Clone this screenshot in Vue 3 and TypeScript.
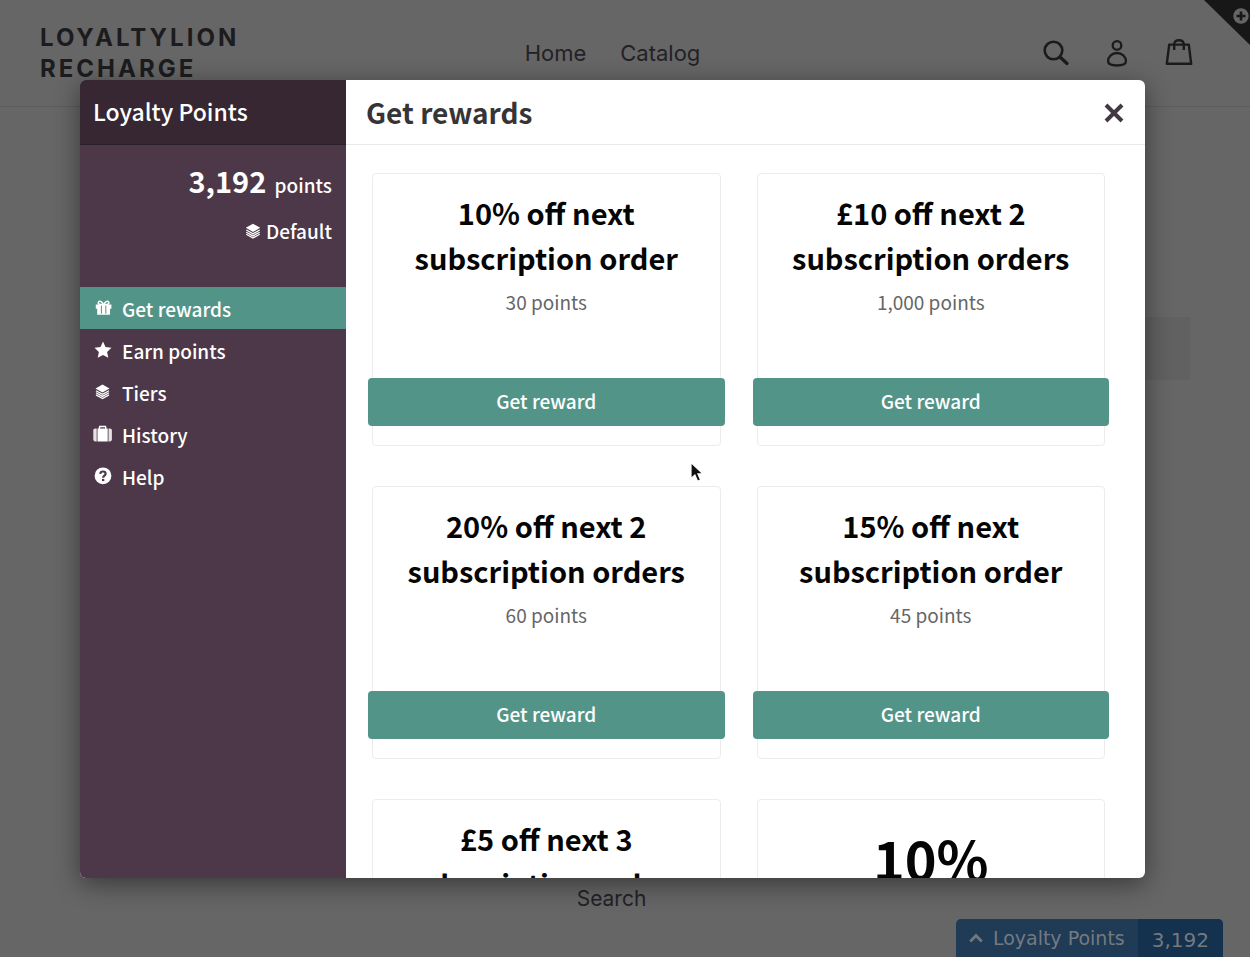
<script setup lang="ts">
import { ref } from 'vue'

interface Reward {
  title: string
  cost?: string
  large?: boolean
}

type IconName = 'gift' | 'star' | 'layers' | 'suitcase' | 'help'

interface MenuItem {
  label: string
  icon: IconName
}

const menu: MenuItem[] = [
  { label: 'Get rewards', icon: 'gift' },
  { label: 'Earn points', icon: 'star' },
  { label: 'Tiers', icon: 'layers' },
  { label: 'History', icon: 'suitcase' },
  { label: 'Help', icon: 'help' },
]

const rewards: Reward[] = [
  { title: '10% off next subscription order', cost: '30 points' },
  { title: '£10 off next 2 subscription orders', cost: '1,000 points' },
  { title: '20% off next 2 subscription orders', cost: '60 points' },
  { title: '15% off next subscription order', cost: '45 points' },
  { title: '£5 off next 3 subscription orders' },
  { title: '10%', large: true },
]

const active = ref('Get rewards')
</script>

<template>
  <div class="stage">
    <div class="store">
      <header class="store-header">
        <a class="logo" href="#">LOYALTYLION RECHARGE</a>
        <nav class="store-nav">
          <a href="#">Home</a>
          <a href="#">Catalog</a>
        </nav>
        <div class="store-tools">
          <button type="button" aria-label="Search the store">
            <svg width="28" height="28" viewBox="0 0 28 28" fill="none" stroke="#1d1a1e" stroke-width="2.6">
              <circle cx="12.5" cy="11.5" r="8.8" />
              <path d="M19 18l7 6.500" stroke-width="3.2" stroke-linecap="round" />
            </svg>
          </button>
          <button type="button" aria-label="Account">
            <svg width="28" height="28" viewBox="0 0 28 28" fill="none" stroke="#1d1a1e" stroke-width="2.3">
              <circle cx="14" cy="6.4" r="4.3" />
              <path d="M14 14c-5 0-8.900 3.600-8.900 8.300 0 3 2.400 4.200 8.900 4.200s8.900-1.200 8.900-4.200c0-4.700-3.900-8.300-8.900-8.300z" />
            </svg>
          </button>
          <button type="button" aria-label="Cart">
            <svg width="28" height="28" viewBox="0 0 28 28" fill="none" stroke="#1d1a1e" stroke-width="2.4" stroke-linejoin="round">
              <path d="M4.2 5.600h19.600l2.400 19.200H1.800z" />
              <path d="M9.200 11V5.700C9.200 2.900 11 1.200 14 1.200s4.800 1.700 4.800 4.500V11" />
            </svg>
          </button>
        </div>
      </header>
      <main class="store-main">
        <div class="field-ghost"></div>
      </main>
      <footer class="store-footer"><a href="#">Search</a></footer>
    </div>

    <svg class="corner" width="46" height="46" viewBox="0 0 46 46">
      <path d="M0 0h46v45z" fill="#171717" />
      <circle cx="37" cy="16" r="7.700" fill="#666" />
      <path d="M37 11.500v9M32.500 16h9" stroke="#171717" stroke-width="2.600" />
    </svg>

    <button class="launcher" type="button">
      <span class="launcher-label">
        <svg width="14" height="10" viewBox="0 0 14 10" fill="none" stroke="#70767b" stroke-width="3">
          <path d="M1.200 8.500L7 2.700l5.800 5.800" />
        </svg>
        Loyalty Points
      </span>
      <span class="launcher-count">3,192</span>
    </button>

    <section class="modal" role="dialog" aria-label="Loyalty Points">
      <aside class="side">
        <h2 class="side-title">Loyalty Points</h2>
        <div class="balance">
          <p class="points"><strong>3,192</strong> points</p>
          <p class="tier">
            <svg width="16" height="16" viewBox="0 0 16 16">
              <path d="M8 .8l7.200 4L8 9 .8 4.800z" fill="#fff" />
              <path d="M1.300 7l6.700 3.700L14.700 7M1.300 9.200L8 12.900l6.700-3.700M1.300 11.300L8 15l6.700-3.700" fill="none" stroke="#fff" stroke-width="1.300" />
            </svg>
            Default
          </p>
        </div>
        <nav class="menu">
          <a
            v-for="item in menu"
            :key="item.label"
            href="#"
            class="menu-item"
            :class="{ 'is-active': item.label === active }"
            @click.prevent="active = item.label"
          >
            <svg v-if="item.icon === 'gift'" width="20" height="18" viewBox="0 0 20 18">
              <path d="M2.800 5.600h15.600v4.200H17v6H4.200v-6H2.800z" fill="#fff" />
              <path d="M8.400 6.500v8.200M12.800 6.500v8.200" stroke="#539488" stroke-width="1" />
              <path d="M10.300 5.400C9 2.600 7.300 1.700 6 2.500c-1.500 1-.6 2.900 1.300 2.900zM10.900 5.400c1.300-2.800 3-3.700 4.300-2.900 1.500 1 .6 2.900-1.300 2.900z" fill="none" stroke="#fff" stroke-width="1.500" />
            </svg>
            <svg v-else-if="item.icon === 'star'" width="20" height="18" viewBox="0 0 20 18">
              <path d="M10 .6l2.500 5.500 6 .700-4.400 4.100 1.200 5.900L10 13.900l-5.300 2.900 1.200-5.900L1.500 6.800l6-.700z" fill="#fff" />
            </svg>
            <svg v-else-if="item.icon === 'layers'" width="20" height="18" viewBox="0 0 20 18">
              <path d="M9.500 1.600l7 3.900-7 4-7-4z" fill="#fff" />
              <path d="M3 7.700l6.500 3.600L16 7.700M3 9.800l6.500 3.600L16 9.800M3 11.900l6.500 3.600 6.500-3.600" fill="none" stroke="#fff" stroke-width="1.300" />
            </svg>
            <svg v-else-if="item.icon === 'suitcase'" width="20" height="18" viewBox="0 0 20 18" fill="#fff">
              <path d="M3.700 3.400v13H2.400C1 16.400.3 15.600.3 14.600V5.200c0-1 .7-1.800 2.100-1.800zM15.500 3.400v13h1.300c1.400 0 2.100-.8 2.100-1.800V5.200c0-1-.7-1.800-2.100-1.800z" opacity=".85" />
              <path d="M4.500 3.400h1.300V2.200c0-.9.500-1.400 1.300-1.400h5c.8 0 1.300.5 1.300 1.400v1.200h1.300v13H4.500zM7.200 3.400H12V2.200H7.200z" fill-rule="evenodd" />
            </svg>
            <svg v-else width="20" height="18" viewBox="0 0 20 18">
              <circle cx="10" cy="8.800" r="8.400" fill="#fff" />
              <path d="M7.200 6.900c.2-1.600 1.200-2.400 2.800-2.400 1.500 0 2.600.9 2.600 2.200 0 2-2.500 1.900-2.500 4" fill="none" stroke="#4c3848" stroke-width="2.200" />
              <path d="M9 11.900h2.300v2.200H9z" fill="#4c3848" />
            </svg>
            <span>{{ item.label }}</span>
          </a>
        </nav>
      </aside>

      <div class="panel">
        <header class="panel-header">
          <h1>Get rewards</h1>
          <button class="close" type="button" aria-label="Close">
            <svg width="20" height="20" viewBox="0 0 20 20" stroke="#443940" stroke-width="4">
              <path d="M2 2l16 16M18 2L2 18" />
            </svg>
          </button>
        </header>
        <div class="rewards">
          <article v-for="reward in rewards" :key="reward.title" class="card" :class="{ 'is-large': reward.large }">
            <h3>{{ reward.title }}</h3>
            <p v-if="reward.cost">{{ reward.cost }}</p>
            <button v-if="reward.cost" type="button">Get reward</button>
          </article>
        </div>
      </div>
    </section>

    <svg class="pointer" width="16" height="23" viewBox="0 0 16 23">
      <path d="M2 1.500v16l3.900-3.500 2.700 6.200 3-1.300-2.700-6h5z" fill="#111" stroke="#fff" stroke-width="1.200" />
    </svg>
  </div>
</template>

<style>
body {
  margin: 0;
  padding: 0 2px 13px 0;
  background: #fff;
}
</style>

<style scoped>
.stage {
  position: relative;
  min-height: calc(100vh - 13px);
  display: flex;
  overflow: hidden;
  background: #666;
  font-family: "Noto Sans CJK SC", "Noto Sans CJK JP", sans-serif;
}
.stage *,
.stage {
  box-sizing: border-box;
}
h1,
h2,
h3,
p {
  margin: 0;
}
a {
  color: inherit;
  text-decoration: none;
}
button {
  border: 0;
  padding: 0;
  background: none;
  color: inherit;
  font: inherit;
  cursor: pointer;
}
svg {
  display: block;
  flex: none;
}

.store {
  flex: 1;
  display: flex;
  flex-direction: column;
  color: #242126;
  font-family: Inter, "Liberation Sans", sans-serif;
}
.store-header {
  display: grid;
  grid-template-columns: 1fr auto 1fr;
  align-items: center;
  height: 107px;
  padding: 0 57px 0 32px;
  border-bottom: 1px solid #5c5c5c;
}
.logo {
  width: 248px;
  padding-left: 8px;
  color: #1c1b1d;
  font-size: 24px;
  font-weight: 700;
  line-height: 31px;
  letter-spacing: 3px;
}
.store-nav {
  display: flex;
  gap: 34px;
  font-size: 22px;
  line-height: 28px;
}
.store-tools {
  display: flex;
  justify-content: flex-end;
  gap: 34px;
}
.store-main {
  flex: 1;
  display: flex;
  justify-content: flex-end;
  padding: 210px 60px 0 0;
}
.field-ghost {
  width: 480px;
  height: 63px;
  background: #616161;
}
.store-footer {
  padding: 0 27px 44px 0;
  font-size: 21px;
  line-height: 28px;
  text-align: center;
}

.corner {
  position: absolute;
  top: 0;
  right: 0;
}
.launcher {
  position: absolute;
  right: 27px;
  bottom: 0;
  display: flex;
  height: 38px;
  overflow: hidden;
  border-radius: 5px 5px 0 0;
  background: #1f3b56;
  color: #747a80;
  font-family: "DejaVu Sans", sans-serif;
  font-size: 19px;
  line-height: 40px;
}
.launcher-label {
  display: flex;
  align-items: center;
  gap: 10px;
  padding: 0 13px;
}
.launcher-count {
  padding: 1px 14px 0;
  background: #14314e;
  font-size: 20px;
}

.modal {
  position: absolute;
  inset: 80px 105px 79px 80px;
  display: flex;
  overflow: hidden;
  border-radius: 6px;
  background: #fff;
  box-shadow: 0 6px 26px rgba(0, 0, 0, 0.45);
}
.side {
  flex: none;
  width: 266px;
  background: #4c3848;
  color: #fff;
}
.side-title {
  height: 65px;
  padding-left: 13px;
  border-bottom: 1px solid #2a1e28;
  background: #362733;
  font-size: 23px;
  font-weight: 500;
  line-height: 62px;
}
.balance {
  height: 142px;
  padding: 11px 14px 0 0;
  font-size: 19px;
  font-weight: 500;
  text-align: right;
}
.points {
  line-height: 48px;
}
.points strong {
  margin-right: 4px;
  font-size: 29px;
  font-weight: 700;
}
.tier {
  display: flex;
  align-items: center;
  justify-content: flex-end;
  gap: 5px;
  padding-top: 8px;
  line-height: 28px;
}
.menu-item {
  display: flex;
  align-items: center;
  gap: 9px;
  height: 42px;
  padding-left: 13px;
  font-size: 19px;
  font-weight: 500;
}
.menu-item.is-active {
  background: #539488;
}

.panel {
  flex: 1;
  display: flex;
  flex-direction: column;
  min-width: 0;
}
.panel-header {
  flex: none;
  display: flex;
  align-items: center;
  justify-content: space-between;
  height: 65px;
  padding: 0 21px 0 20px;
  border-bottom: 1px solid #e9e9e9;
}
.panel-header h1 {
  color: #363436;
  font-size: 28px;
  font-weight: 700;
  line-height: 40px;
}
.close {
  padding-top: 2px;
}
.rewards {
  flex: 1;
  display: grid;
  grid-template-columns: 1fr 1fr;
  grid-auto-rows: 273px;
  gap: 40px 36px;
  min-height: 0;
  padding: 28px 40px 0 26px;
  overflow: hidden;
}
.card {
  display: flex;
  flex-direction: column;
  padding: 16px 0 19px;
  border: 1px solid #ececec;
  border-radius: 4px;
  text-align: center;
}
.card h3 {
  padding: 0 30px;
  color: #050505;
  font-size: 29px;
  font-weight: 700;
  line-height: 45px;
}
.card p {
  color: #666;
  font-size: 19px;
  line-height: 44px;
}
.card button {
  height: 48px;
  margin: auto -5px 0;
  padding-bottom: 3px;
  border-radius: 4px;
  background: #539488;
  color: #fff;
  font-size: 19px;
  font-weight: 500;
}
.card.is-large h3 {
  font-size: 54px;
  line-height: 84px;
}

.pointer {
  position: absolute;
  top: 461px;
  left: 689px;
}
</style>
